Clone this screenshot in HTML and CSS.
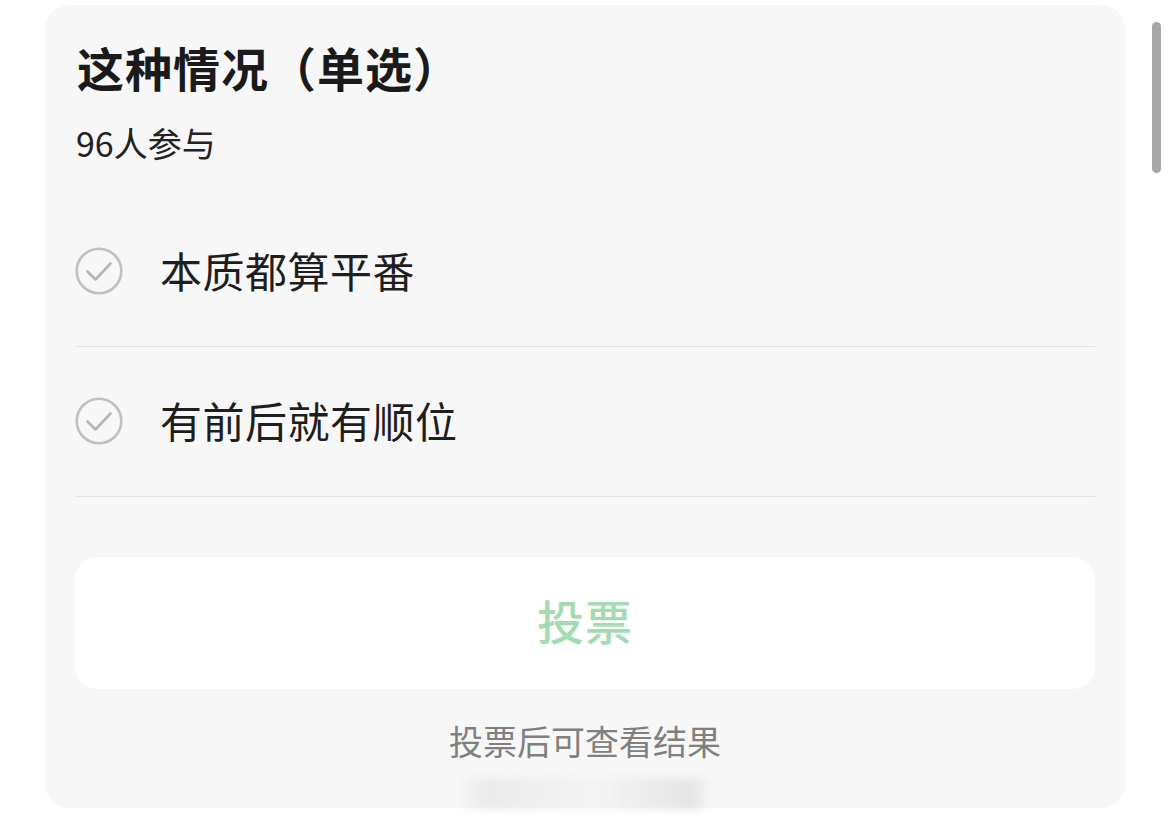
FILE: index.html
```html
<!DOCTYPE html>
<html lang="zh-CN">
<head>
<meta charset="utf-8">
<title>投票</title>
<link rel="stylesheet" href="styles.css">
</head>
<body>
<div class="page">
  <section class="card">
    <h1 class="title">这种情况（单选）</h1>
    <p class="count">96人参与</p>
    <ul class="options">
      <li class="option">
        <svg class="check" viewBox="0 0 48 48" width="48" height="48" aria-hidden="true">
          <circle cx="24" cy="24" r="22.3" fill="none" stroke="#c0c0c0" stroke-width="2.6"/>
          <path d="M12.5 24.5 L20.5 32.5 L35.5 16.5" fill="none" stroke="#b5b5b5" stroke-width="2.6" stroke-linecap="round" stroke-linejoin="round"/>
        </svg>
        <span class="label">本质都算平番</span>
      </li>
      <li class="option">
        <svg class="check" viewBox="0 0 48 48" width="48" height="48" aria-hidden="true">
          <circle cx="24" cy="24" r="22.3" fill="none" stroke="#c0c0c0" stroke-width="2.6"/>
          <path d="M12.5 24.5 L20.5 32.5 L35.5 16.5" fill="none" stroke="#b5b5b5" stroke-width="2.6" stroke-linecap="round" stroke-linejoin="round"/>
        </svg>
        <span class="label">有前后就有顺位</span>
      </li>
    </ul>
    <button class="vote" type="button">投票</button>
    <p class="hint">投票后可查看结果</p>
  </section>
  <div class="watermark" aria-hidden="true"></div>
  <div class="scrollbar" aria-hidden="true"></div>
</div>
</body>
</html>
```

FILE: styles.css
```css
html, body {
  margin: 0;
  padding: 0;
  background: #ffffff;
}

body {
  font-family: "Noto Sans CJK SC", "Noto Sans", sans-serif;
  width: 1170px;
  height: 827px;
  overflow: hidden;
}

.page {
  position: relative;
  width: 1170px;
  height: 827px;
  padding: 5px 0 0 45px;
  box-sizing: border-box;
}

.card {
  width: 1080px;
  height: 803px;
  box-sizing: border-box;
  background: #f7f7f7;
  border-radius: 24px;
  padding: 32px 30px 0 30px;
  display: flex;
  flex-direction: column;
}

.title {
  margin: 0 0 0 2px;
  font-size: 47px;
  line-height: 60px;
  font-weight: 700;
  color: #1a1a1a;
  letter-spacing: 1px;
}

.count {
  margin: 24px 0 0 1px;
  font-size: 34px;
  line-height: 44px;
  color: #222222;
}

.options {
  list-style: none;
  margin: 32px 0 0 0;
  padding: 0;
}

.option {
  height: 150px;
  box-sizing: border-box;
  border-bottom: 1px solid #e2e2e2;
  display: flex;
  align-items: center;
  gap: 37px;
}

.check {
  flex: none;
  width: 48px;
  height: 48px;
  margin-top: -2px;
}

.label {
  font-size: 42px;
  line-height: 50px;
  color: #1e1e1e;
  letter-spacing: 0.5px;
  margin-top: -4px;
}

.vote {
  margin-top: 60px;
  height: 132px;
  width: 100%;
  border: none;
  border-radius: 22px;
  background: #ffffff;
  font-family: "Noto Sans CJK SC", "Noto Sans", sans-serif;
  font-size: 47px;
  line-height: 60px;
  font-weight: 500;
  color: #a5dbb3;
  letter-spacing: 1px;
  padding: 0 0 6px 0;
}

.hint {
  margin: 30px 0 0 0;
  text-align: center;
  font-size: 34px;
  line-height: 44px;
  color: #808080;
}

.watermark {
  position: absolute;
  left: 456px;
  top: 778px;
  width: 256px;
  height: 32px;
  background: linear-gradient(90deg, rgba(235,235,235,0) 0%, rgba(225,225,225,0.55) 12%, rgba(238,238,238,0.45) 55%, rgba(215,215,215,0.55) 92%, rgba(235,235,235,0) 100%);
  filter: blur(3px);
  border-radius: 6px;
}

.scrollbar {
  position: absolute;
  left: 1152px;
  top: 22px;
  width: 9px;
  height: 151px;
  border-radius: 5px;
  background: #a8a8a8;
}
```
